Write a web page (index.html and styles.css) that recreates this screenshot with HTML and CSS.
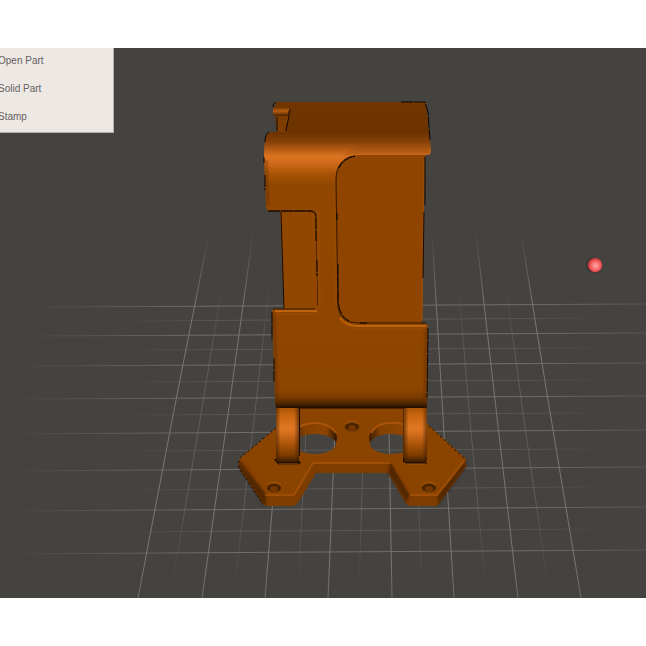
FILE: index.html
```
<!DOCTYPE html>
<html lang="en">
<head>
<meta charset="utf-8">
<title>Part viewer</title>
<link rel="stylesheet" href="styles.css">
</head>
<body>
<main class="viewport">
  <svg class="scene" viewBox="0 48 646 550" preserveAspectRatio="xMidYMid slice" role="img" aria-label="3D part on grid">
    <defs>
      <linearGradient id="major" gradientUnits="userSpaceOnUse" x1="15" y1="0" x2="660" y2="0">
        <stop offset="0" stop-color="#6f6e6b" stop-opacity=".05"/><stop offset=".3" stop-color="#6f6e6b"/><stop offset=".78" stop-color="#6f6e6b"/><stop offset="1" stop-color="#6f6e6b" stop-opacity=".35"/>
      </linearGradient>
      <linearGradient id="minor" gradientUnits="userSpaceOnUse" x1="120" y1="0" x2="610" y2="0">
        <stop offset="0" stop-color="#585754" stop-opacity="0"/><stop offset=".2" stop-color="#585754"/><stop offset=".8" stop-color="#585754"/><stop offset="1" stop-color="#585754" stop-opacity="0"/>
      </linearGradient>
      <linearGradient id="majorV" gradientUnits="userSpaceOnUse" x1="0" y1="230" x2="0" y2="598">
        <stop offset="0" stop-color="#777673" stop-opacity="0"/><stop offset=".2" stop-color="#777673"/><stop offset=".9" stop-color="#777673"/><stop offset="1" stop-color="#777673" stop-opacity=".8"/>
      </linearGradient>
      <linearGradient id="minorV" gradientUnits="userSpaceOnUse" x1="0" y1="280" x2="0" y2="592">
        <stop offset="0" stop-color="#5d5c59" stop-opacity="0"/><stop offset=".25" stop-color="#5d5c59"/><stop offset=".7" stop-color="#5d5c59"/><stop offset="1" stop-color="#5d5c59" stop-opacity="0"/>
      </linearGradient>
      <linearGradient id="shell" gradientUnits="userSpaceOnUse" x1="0" y1="102" x2="0" y2="408">
        <stop offset="0" stop-color="#713600"/><stop offset=".1" stop-color="#6c3300"/><stop offset=".13" stop-color="#854109"/><stop offset=".155" stop-color="#b55c13"/><stop offset=".178" stop-color="#dc7422"/><stop offset=".2" stop-color="#cf6a1a"/><stop offset=".235" stop-color="#a85206"/><stop offset=".27" stop-color="#924700"/><stop offset=".94" stop-color="#8e4500"/><stop offset=".965" stop-color="#7a3b00"/><stop offset=".985" stop-color="#4f2600"/><stop offset="1" stop-color="#1d0e00"/>
      </linearGradient>
      <linearGradient id="hinge" x1="0" y1="0" x2="0" y2="1">
        <stop offset="0" stop-color="#a85307"/><stop offset=".15" stop-color="#c9660f"/><stop offset=".4" stop-color="#e27925"/><stop offset=".7" stop-color="#a75107"/><stop offset=".88" stop-color="#7b3b00"/><stop offset="1" stop-color="#3a1b00"/>
      </linearGradient>
      <linearGradient id="hingeSide" x1="0" y1="0" x2="1" y2="0">
        <stop offset="0" stop-color="#3b1c00" stop-opacity=".6"/><stop offset=".2" stop-color="#3b1c00" stop-opacity="0"/><stop offset=".78" stop-color="#3b1c00" stop-opacity="0"/><stop offset="1" stop-color="#3b1c00" stop-opacity=".6"/>
      </linearGradient>
      <linearGradient id="wall" x1="0" y1="0" x2="1" y2="0">
        <stop offset="0" stop-color="#3a1b00"/><stop offset=".25" stop-color="#834000"/><stop offset=".75" stop-color="#8f4500"/><stop offset="1" stop-color="#2b1400"/>
      </linearGradient>
      <linearGradient id="clip" x1="0" y1="0" x2="0" y2="1">
        <stop offset="0" stop-color="#6c3300"/><stop offset=".45" stop-color="#b75d0e"/><stop offset="1" stop-color="#472200"/>
      </linearGradient>
      <radialGradient id="ball" cx=".55" cy=".55" r=".55">
        <stop offset="0" stop-color="#ffaaa8"/><stop offset=".35" stop-color="#fb7f7e"/><stop offset=".75" stop-color="#ea5050"/><stop offset="1" stop-color="#a52c2c"/>
      </radialGradient>
      <mask id="holes" maskUnits="userSpaceOnUse" x="230" y="400" width="245" height="115">
        <rect x="230" y="400" width="245" height="115" fill="#fff"/>
        <ellipse cx="315" cy="444" rx="21" ry="10" fill="#000"/><ellipse cx="391" cy="444" rx="21" ry="10" fill="#000"/>
      </mask>
      <filter id="soft" x="-20%" y="-20%" width="140%" height="140%"><feGaussianBlur stdDeviation="1"/></filter>
      <g id="screw">
        <ellipse rx="8" ry="6" fill="#834000"/>
        <path d="M-7 -2A8 6 0 0 1 7 -2" fill="none" stroke="#aa550b"/>
        <ellipse cy="1" rx="7" ry="4" fill="#462100"/><ellipse cy="2" rx="4" ry="3" fill="#743700"/>
      </g>
    </defs>

    <g fill="none" stroke="url(#minor)">
      <path d="M120 321L610 318M120 350L610 348M120 382L610 380M120 415L610 413M110 451L615 449M105 490L615 487M95 532L620 529"/>
      <g stroke="url(#minorV)"><path d="M223 280L200 420L171 592M270 280L254 420L234 592M306 430L298 592M363 460L359 592M417 460L422 592M458 280L470 420L486 592M505 280L524 420L549 592"/></g>
    </g>
    <g fill="none" stroke="url(#major)">
      <path d="M50 307L646 304M40 336L646 333M25 366L646 363M18 399L646 396M0 434L646 430M0 471L646 467M0 511L646 507M0 554L646 550"/>
      <g stroke="url(#majorV)"><path d="M209 233L176 400L138 598M253 233L230 400L202 598M281 400L265 598M335 430L328 598M389 430L392 598M432 233L442 400L454 598M476 233L495 400L518 598M521 233L548 400L581 598"/></g>
    </g>

    <g mask="url(#holes)">
      <path d="M276 404H427V424L466 459V467L438 505Q437 506 433 506H411Q407 506 405 502L388 473H316L299 501Q296 506 292 506H268Q264 506 262 503L239 468V459L276 428Z" fill="#7d3c00"/>
      <path d="M239 462L266 494V506L262 503L239 468ZM391 463L409 495L407 503L388 473ZM466 460L438 495V505L466 467Z" fill="#2a1300" opacity=".5" filter="url(#soft)"/>
      <path d="M276 404H427V424L466 459L438 493Q437 494 434 494H409L391 463H313L296 493Q295 494 292 494H267Q265 494 263 491L239 459L276 428Z" fill="#8b4300"/>
      <path d="M265 495H294L313 463H391M410 495H437L464 461" fill="none" stroke="#a9540a" stroke-width="2" opacity=".75"/>
      <path d="M240 461L265 494M390 464L408 494" fill="none" stroke="#542800" stroke-width="3" opacity=".5" filter="url(#soft)"/>
      <ellipse cx="315" cy="438" rx="22" ry="15" fill="url(#wall)"/><ellipse cx="391" cy="438" rx="22" ry="15" fill="url(#wall)"/>
      <path d="M295 430Q303 423 315 423Q329 423 336 433M371 433Q377 423 390 423Q401 422 407 427" fill="none" stroke="#b2590c" stroke-width="2" opacity=".8"/>
      <use href="#screw" x="352" y="426"/><use href="#screw" x="274" y="487"/><use href="#screw" x="429" y="487"/>
      <path d="M276 407H427" stroke="#120800" stroke-width="3"/>
    </g>
    <path d="M276 428L239 459V468L263 504M429 426L466 460" fill="none" stroke="#160a00" stroke-dasharray="2 3"/>

    <path d="M274 459H298L301 463L297 465H279L275 461ZM403 458H425L427 464H408L403 462Z" fill="#201000"/>
    <path d="M299 408V456" stroke="#1b0d00" stroke-width="2"/><path d="M404 409V458" stroke="#5b2b00" stroke-width="2"/>
    <rect x="276" y="407" width="23" height="55" rx="3" fill="url(#hinge)"/><rect x="276" y="407" width="23" height="55" rx="3" fill="url(#hingeSide)"/>
    <rect x="404" y="407" width="23" height="55" rx="3" fill="url(#hinge)"/><rect x="404" y="407" width="23" height="55" rx="3" fill="url(#hingeSide)"/>
    <path d="M279 464H298M407 464H426" stroke="#ae5509"/>

    <path d="M280 208H318V312H284Z" fill="#924700"/>
    <path d="M281 212L284 308M316 214L318 306" stroke="#170a00" fill="none"/>
    <path d="M334 153H425L422 325H336Z" fill="#8f4500"/>
    <path d="M424 157L423 240L422 320" fill="none" stroke="#a04e05"/>
    <path d="M425 157V205M424 212L423 278" fill="none" stroke="#150900"/>

    <path d="M275 116H290V132H277Z" fill="#7d3c00"/>
    <path d="M277 117V131M286 131L288 121" stroke="#120800"/>
    <path d="M276 102H424Q426 102 426 104L430 140L431 150Q431 155 428 155H359Q336 156 335 181L338 308Q340 324 360 324H426Q428 324 428 327L427 402Q427 408 424 408H279Q275 408 275 403L272 312Q272 309 275 309H315Q318 309 318 306L316 216Q316 211 311 211H269Q267 211 266 208L264 157Q264 134 269 132H285L289 116V110H274Z" fill="url(#shell)"/>
    <path d="M340 157L358 145H430V155H358Z" fill="#7a3a00" opacity=".18" filter="url(#soft)"/>
    <rect x="273" y="107" width="16" height="9" rx="2" fill="url(#clip)"/>
    <path d="M286 131L289 116V111L291 110" fill="none" stroke="#170a00"/>
    <path d="M275 311H317M340 318Q345 326 359 326H426" fill="none" stroke="#c0630f" stroke-width="2"/>
    <path d="M341 321Q347 329 360 329H426M275 314H318" fill="none" stroke="#984a04" stroke-width="2" opacity=".7"/>
    <path d="M318 211L320 308M334 180L336 308" fill="none" stroke="#a55208" stroke-width="2" opacity=".35" filter="url(#soft)"/>
    <path d="M274 314L277 400M426 328L425 400M266 160L268 206" fill="none" stroke="#542700" stroke-width="2" opacity=".55" filter="url(#soft)"/>
    <path d="M355 156Q336 158 336 181L338 308Q341 323 358 323H426M268 211H311Q315 211 316 215M273 309H315" fill="none" stroke="#341900"/>
    <path d="M355 156Q344 158 339 168M337 213V220M338 264V300Q339 316 349 321M360 323H367M268 211H311Q315 211 316 216V241M317 260V276M401 102H425L428 112L430 140M276 102Q273 103 273 107M269 132Q265 134 265 142M264 157V163M265 175V190M272 312V340M274 358V382M428 328L427 398" fill="none" stroke="#0c0500" stroke-dasharray="12 1"/>
    <circle cx="594" cy="265" r="8" fill="#222" opacity=".5"/><circle cx="595" cy="265" r="7" fill="url(#ball)" stroke="#d94848" stroke-opacity=".5"/>
  </svg>
  <nav class="menu" aria-label="Part menu">
    <button class="menu-item" type="button">Open Part</button>
    <button class="menu-item" type="button">Solid Part</button>
    <button class="menu-item" type="button">Stamp</button>
  </nav>
</main>
</body>
</html>
```
FILE: styles.css
```
* {
  box-sizing: border-box;
}

body {
  display: flex;
  min-height: 100vh;
  margin: 0;
  padding: 48px 0;
  background: #fff;
  font-family: "Liberation Sans", Arial, sans-serif;
}

.viewport {
  position: relative;
  display: flex;
  flex: 1;
  overflow: hidden;
  background: #444340;
}

.scene {
  display: block;
  flex: 1;
  width: 100%;
  min-width: 0;
}

.menu {
  position: absolute;
  top: -1px;
  left: -8px;
  display: flex;
  flex-direction: column;
  width: 122px;
  padding-bottom: 1px;
  border-right: 1px solid #b5b0ac;
  border-bottom: 1px solid #b5b0ac;
  background: #ede8e4;
}

.menu-item {
  height: 28px;
  padding: 0 6px;
  border: 0;
  background: transparent;
  color: #65615f;
  font: 10px/28px "Liberation Sans", Arial, sans-serif;
  text-align: left;
}
```
